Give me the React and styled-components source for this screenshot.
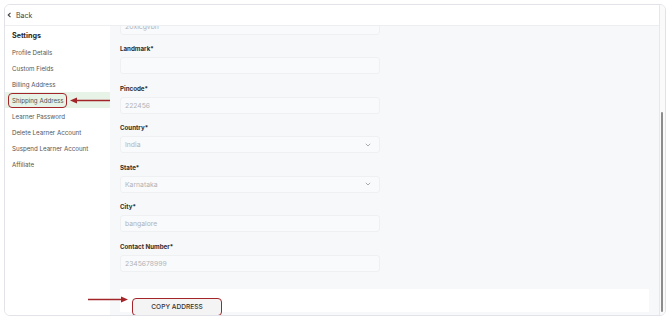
import styled, { createGlobalStyle } from "styled-components";

const GlobalStyle = createGlobalStyle`
  html, body { margin: 0; padding: 0; background: #ffffff; }
  body { font-family: Inter, "Noto Sans", sans-serif; }
`;

const RED = "#a3252a";

const menu = [
  "Profile Details",
  "Custom Fields",
  "Billing Address",
  "Shipping Address",
  "Learner Password",
  "Delete Learner Account",
  "Suspend Learner Account",
  "Affiliate",
];

// first field is scrolled mostly out of view, only its input shows
const fields = [
  { label: "", value: "20xicgvbh" },
  { label: "Landmark*", value: "" },
  { label: "Pincode*", value: "222456" },
  { label: "Country*", value: "India", select: true },
  { label: "State*", value: "Karnataka", select: true },
  { label: "City*", value: "bangalore" },
  { label: "Contact Number*", value: "2345678999" },
];

const Arrow = ({ left }) => (
  <svg width="40" height="7" viewBox="0 0 40 7">
    {left ? (
      <>
        <line x1="6" y1="3.5" x2="40" y2="3.5" stroke={RED} strokeWidth="1.6" />
        <polygon points="0,3.5 7,0.5 7,6.5" fill={RED} />
      </>
    ) : (
      <>
        <line x1="0" y1="3.5" x2="34" y2="3.5" stroke={RED} strokeWidth="1.6" />
        <polygon points="40,3.5 33,0.5 33,6.5" fill={RED} />
      </>
    )}
  </svg>
);

const App = () => (
  <>
    <GlobalStyle />
    <Frame>
      <Content>
        <Header>
          <svg width="5" height="6" viewBox="0 0 5 6">
            <polyline points="3.5,0.8 1.2,3 3.5,5.2" fill="none" stroke="#444" strokeWidth="1.1" />
          </svg>
          <BackText>Back</BackText>
        </Header>
        <Body>
          <Sidebar>
            <SideTitle>Settings</SideTitle>
            {menu.map((item) =>
              item === "Shipping Address" ? (
                <MenuItem key={item} active>
                  <Marked>{item}</Marked>
                  <Arrow left />
                </MenuItem>
              ) : (
                <MenuItem key={item}>{item}</MenuItem>
              )
            )}
          </Sidebar>
          <Main>
            <Form>
              {fields.map((f) => (
                <Field key={f.value + f.label}>
                  {f.label && <Label>{f.label}</Label>}
                  <Input>
                    {f.value}
                    {f.select && (
                      <svg width="6" height="4" viewBox="0 0 6 4">
                        <polyline points="0.8,0.8 3,3 5.2,0.8" fill="none" stroke="#a9acb0" strokeWidth="1" />
                      </svg>
                    )}
                  </Input>
                </Field>
              ))}
            </Form>
            <Footer>
              <CopyButton>COPY ADDRESS</CopyButton>
            </Footer>
          </Main>
        </Body>
      </Content>
      <Track>
        <Thumb />
      </Track>
      <FooterArrow>
        <Arrow />
      </FooterArrow>
    </Frame>
  </>
);

const Frame = styled.div`
  position: relative;
  display: flex;
  box-sizing: border-box;
  width: 662px;
  height: 312px;
  margin: 4px 0 0 4px;
  border: 1px solid #e1e3e8;
  border-radius: 6px;
  overflow: hidden;
  background: #ffffff;
`;

const Content = styled.div`
  flex: 1;
  display: flex;
  flex-direction: column;
  min-width: 0;
`;

const Header = styled.div`
  position: relative;
  z-index: 1;
  display: flex;
  align-items: center;
  gap: 4px;
  height: 20px;
  padding-left: 2px;
  border-bottom: 1px solid #eceef1;
  background: #ffffff;
`;

const BackText = styled.span`
  font-size: 7px;
  color: #444;
`;

const Body = styled.div`
  flex: 1;
  display: flex;
  min-height: 0;
`;

const Sidebar = styled.div`
  width: 105px;
  padding-top: 2px;
  background: #ffffff;
`;

const SideTitle = styled.div`
  height: 16px;
  line-height: 16px;
  padding-left: 7px;
  font-size: 7.2px;
  font-weight: 700;
  color: #2b2b2b;
`;

const MenuItem = styled.div`
  display: flex;
  align-items: center;
  gap: 3px;
  height: 16px;
  padding-left: ${({ active }) => (active ? "3px" : "7px")};
  font-size: 6.2px;
  color: #555;
  background: ${({ active }) => (active ? "#e7f3e6" : "transparent")};
`;

const Marked = styled.span`
  display: flex;
  align-items: center;
  height: 15px;
  padding: 0 2px 0 3px;
  border: 1px solid ${RED};
  border-radius: 4px;
  box-sizing: border-box;
`;

const Main = styled.div`
  flex: 1;
  display: flex;
  flex-direction: column;
  padding: 0 10px 3px;
  background: #f7f8f9;
  overflow: hidden;
`;

const Form = styled.div`
  margin-top: -10.5px;
`;

const Field = styled.div`
  margin-bottom: 8.5px;
`;

const Label = styled.div`
  height: 12px;
  line-height: 12px;
  font-size: 6.2px;
  font-weight: 700;
  color: #2e2e2e;
`;

const Input = styled.div`
  display: flex;
  align-items: center;
  justify-content: space-between;
  box-sizing: border-box;
  width: 260px;
  height: 17px;
  margin-top: 2px;
  padding: 0 8px 0 4px;
  border: 1px solid #eef0f2;
  border-radius: 3px;
  background: #f9fafb;
  font-size: 6.8px;
  color: #b0b3b8;
`;

const Footer = styled.div`
  margin-top: auto;
  box-sizing: border-box;
  height: 23px;
  padding: 4px 12px 0;
  background: #ffffff;
`;

const CopyButton = styled.button`
  box-sizing: border-box;
  width: 90px;
  height: 18px;
  padding: 0;
  border: 1px solid ${RED};
  border-radius: 4px;
  background: #f4f4f5;
  font-family: Inter, "Noto Sans", sans-serif;
  font-size: 6.6px;
  font-weight: 500;
  color: #333;
`;

const Track = styled.div`
  width: 5px;
  border-left: 1px solid #e6e8eb;
  background: #fafafa;
`;

const Thumb = styled.div`
  width: 2px;
  height: 200px;
  margin: 107px 0 0 1px;
  border-radius: 1px;
  background: #8c8c8c;
`;

const FooterArrow = styled.div`
  position: absolute;
  left: 83px;
  top: 291px;
  line-height: 0;
`;

export default App;
